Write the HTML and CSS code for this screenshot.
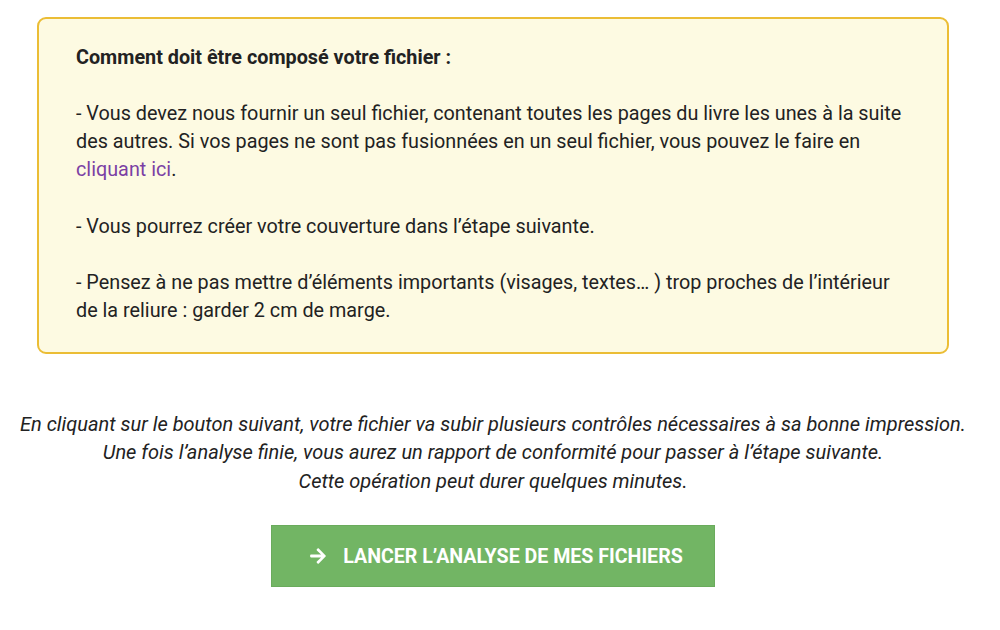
FILE: index.html
```html
<!DOCTYPE html>
<html lang="fr">
<head>
    <meta charset="UTF-8">
    <meta name="viewport" content="width=device-width, initial-scale=1.0">
    <title>Analyse du fichier</title>
    <link rel="stylesheet" href="styles.css">
</head>
<body>
    <div class="page">
        <!-- Encadré d'informations sur le fichier -->
        <div class="info-box">
            <p class="info-title">Comment doit être composé votre fichier :</p>
            <p>- Vous devez nous fournir un seul fichier, contenant toutes les pages du livre les unes à la suite des autres. Si vos pages ne sont pas fusionnées en un seul fichier, vous pouvez le faire en <a href="#">cliquant ici</a>.</p>
            <p>- Vous pourrez créer votre couverture dans l’étape suivante.</p>
            <p>- Pensez à ne pas mettre d’éléments importants (visages, textes… ) trop proches de l’intérieur de la reliure : garder 2 cm de marge.</p>
        </div>

        <p class="notice">
            En cliquant sur le bouton suivant, votre fichier va subir plusieurs contrôles nécessaires à sa bonne impression.<br>
            Une fois l’analyse finie, vous aurez un rapport de conformité pour passer à l’étape suivante.<br>
            Cette opération peut durer quelques minutes.
        </p>

        <div class="button-container">
            <button class="analyse-button">
                <svg viewBox="0 0 448 512" width="18" height="18">
                    <path fill="currentColor" d="M190.5 66.9l22.2-22.2c9.4-9.4 24.6-9.4 33.9 0L441 239c9.4 9.4 9.4 24.6 0 33.9L246.6 467.3c-9.4 9.4-24.6 9.4-33.9 0l-22.2-22.2c-9.5-9.5-9.3-25 .4-34.3L311.4 296H24c-13.3 0-24-10.7-24-24v-32c0-13.3 10.7-24 24-24h287.4L190.9 101.2c-9.8-9.3-10-24.8-.4-34.3z"/>
                </svg>
                Lancer l’analyse de mes fichiers
            </button>
        </div>
    </div>
</body>
</html>
```

FILE: styles.css
```css
/* Mise en page générale */
body {
    margin: 0;
    background-color: #fff;
    font-family: Roboto, "Liberation Sans", sans-serif;
    color: #222;
}

.page {
    width: 986px;
    padding-top: 17px;
}

/* Encadré jaune */
.info-box {
    margin: 0 37px;
    padding: 25px 38px 27px 37px;
    background-color: #fdfae2;
    border: 2px solid #ebbd35;
    border-radius: 9px;
    font-size: 19.8px;
    line-height: 28.1px;
}

.info-box p {
    margin: 0 0 28.1px 0;
}

.info-box p:last-child {
    margin-bottom: 0;
}

.info-title {
    font-weight: bold;
}

.info-box a {
    color: #7b3fa4;
    text-decoration: none;
}

/* Texte explicatif */
.notice {
    margin: 56px 0 0 0;
    text-align: center;
    font-style: italic;
    font-size: 20px;
    line-height: 28.5px;
}

/* Bouton */
.button-container {
    display: flex;
    justify-content: center;
    margin-top: 30px;
}

.analyse-button {
    display: flex;
    align-items: center;
    justify-content: center;
    gap: 16px;
    width: 444px;
    height: 62px;
    background-color: #72b564;
    border: 1px solid #6aab5c;
    color: #fff;
    font-family: Roboto, "Liberation Sans", sans-serif;
    font-size: 19.6px;
    font-weight: bold;
    text-transform: uppercase;
    cursor: pointer;
}

.analyse-button svg {
    margin-left: 6px;
}
```
